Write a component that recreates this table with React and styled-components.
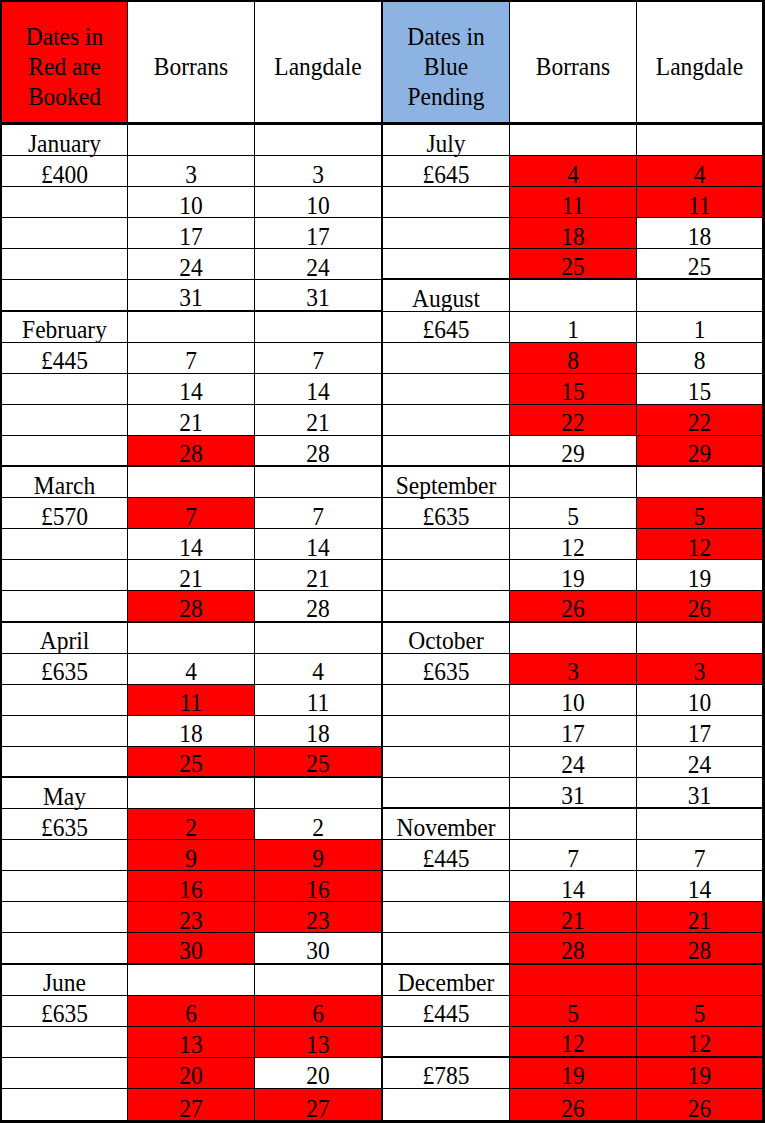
import styled, { createGlobalStyle } from "styled-components";

// booking sheet: two halves of the year side by side, "r" marks a booked (red) date

const GlobalStyle = createGlobalStyle`
  body {
    margin: 0;
    background: #ffffff;
    font-family: "Liberation Serif", "Times New Roman", serif;
    color: #000000;
  }
`;

const Sheet = styled.div`
  display: flex;
  width: 765px;
  height: 1123px;
  box-sizing: border-box;
  border-style: solid;
  border-color: #000000;
  border-width: 2px 3px 3px 2px;
  background: #ffffff;
`;

const Half = styled.div`
  display: grid;
  grid-template-columns: ${(p) => p.$cols};
  grid-template-rows: 123px repeat(32, 1fr);
`;

const Cell = styled.div`
  display: flex;
  align-items: flex-end;
  justify-content: center;
  box-sizing: border-box;
  min-height: 0;
  background: ${(p) => p.$fill || "#ffffff"};
  border-right: ${(p) => p.$edge}px solid #000000;
  border-bottom: ${(p) => p.$rule}px solid #000000;
`;

const HeadCell = styled(Cell)`
  align-items: center;
  padding-top: 8px;
  text-align: center;
`;

const Text = styled.span`
  display: block;
  font-size: 23.5px;
  line-height: 23.5px;
  margin-bottom: -1px;
  white-space: nowrap;
  transform: scaleY(1.11);
  transform-origin: 50% 84%;
`;

const HeadText = styled(Text)`
  line-height: 27px;
  margin-bottom: 0;
  transform-origin: 50% 50%;
`;

const RED = "#ff0000";
const BLUE = "#8db3e2";

const leftGroups = [
  [["January", "", ""], ["£400", "3", "3"], ["", "10", "10"], ["", "17", "17"], ["", "24", "24"], ["", "31", "31"]],
  [["February", "", ""], ["£445", "7", "7"], ["", "14", "14"], ["", "21", "21"], ["", "28r", "28"]],
  [["March", "", ""], ["£570", "7r", "7"], ["", "14", "14"], ["", "21", "21"], ["", "28r", "28"]],
  [["April", "", ""], ["£635", "4", "4"], ["", "11r", "11"], ["", "18", "18"], ["", "25r", "25r"]],
  [["May", "", ""], ["£635", "2r", "2"], ["", "9r", "9r"], ["", "16r", "16r"], ["", "23r", "23r"], ["", "30r", "30"]],
  [["June", "", ""], ["£635", "6r", "6r"], ["", "13r", "13r"], ["", "20r", "20"], ["", "27r", "27r"]],
];

const rightGroups = [
  [["July", "", ""], ["£645", "4r", "4r"], ["", "11r", "11r"], ["", "18r", "18"], ["", "25r", "25"]],
  [["August", "", ""], ["£645", "1", "1"], ["", "8r", "8"], ["", "15r", "15"], ["", "22r", "22r"], ["", "29", "29r"]],
  [["September", "", ""], ["£635", "5", "5r"], ["", "12", "12r"], ["", "19", "19"], ["", "26r", "26r"]],
  [["October", "", ""], ["£635", "3r", "3r"], ["", "10", "10"], ["", "17", "17"], ["", "24", "24"], ["", "31", "31"]],
  [["November", "", ""], ["£445", "7", "7"], ["", "14", "14"], ["", "21r", "21r"], ["", "28r", "28r"]],
  [["December", "r", "r"], ["£445", "5r", "5r"], ["", "12r", "12r"]],
  [["£785", "19r", "19r"], ["", "26r", "26r"]],
];

function SheetHalf({ cols, head, headFill, groups, divider }) {
  const edges = [1, 1, divider];
  const cells = [];

  [head, "Borrans", "Langdale"].forEach((label, i) => {
    cells.push(
      <HeadCell key={`h${i}`} $edge={edges[i]} $rule={3} $fill={i === 0 ? headFill : null}>
        <HeadText>{label}</HeadText>
      </HeadCell>
    );
  });

  groups.forEach((rows, g) => {
    rows.forEach((row, r) => {
      const lastRow = g === groups.length - 1 && r === rows.length - 1;
      const rule = lastRow ? 0 : r === rows.length - 1 ? 2 : 1;
      row.forEach((value, c) => {
        const booked = c > 0 && value.endsWith("r");
        const text = booked ? value.slice(0, -1) : value;
        cells.push(
          <Cell key={`${g}-${r}-${c}`} $edge={edges[c]} $rule={rule} $fill={booked ? RED : null}>
            {text && <Text>{text}</Text>}
          </Cell>
        );
      });
    });
  });

  return <Half $cols={cols}>{cells}</Half>;
}

export default function App() {
  return (
    <>
      <GlobalStyle />
      <Sheet>
        <SheetHalf
          cols="126px 127px 128px"
          head={<>Dates in<br />Red are<br />Booked</>}
          headFill={RED}
          groups={leftGroups}
          divider={2}
        />
        <SheetHalf
          cols="127px 127px 125px"
          head={<>Dates in<br />Blue<br />Pending</>}
          headFill={BLUE}
          groups={rightGroups}
          divider={0}
        />
      </Sheet>
    </>
  );
}
